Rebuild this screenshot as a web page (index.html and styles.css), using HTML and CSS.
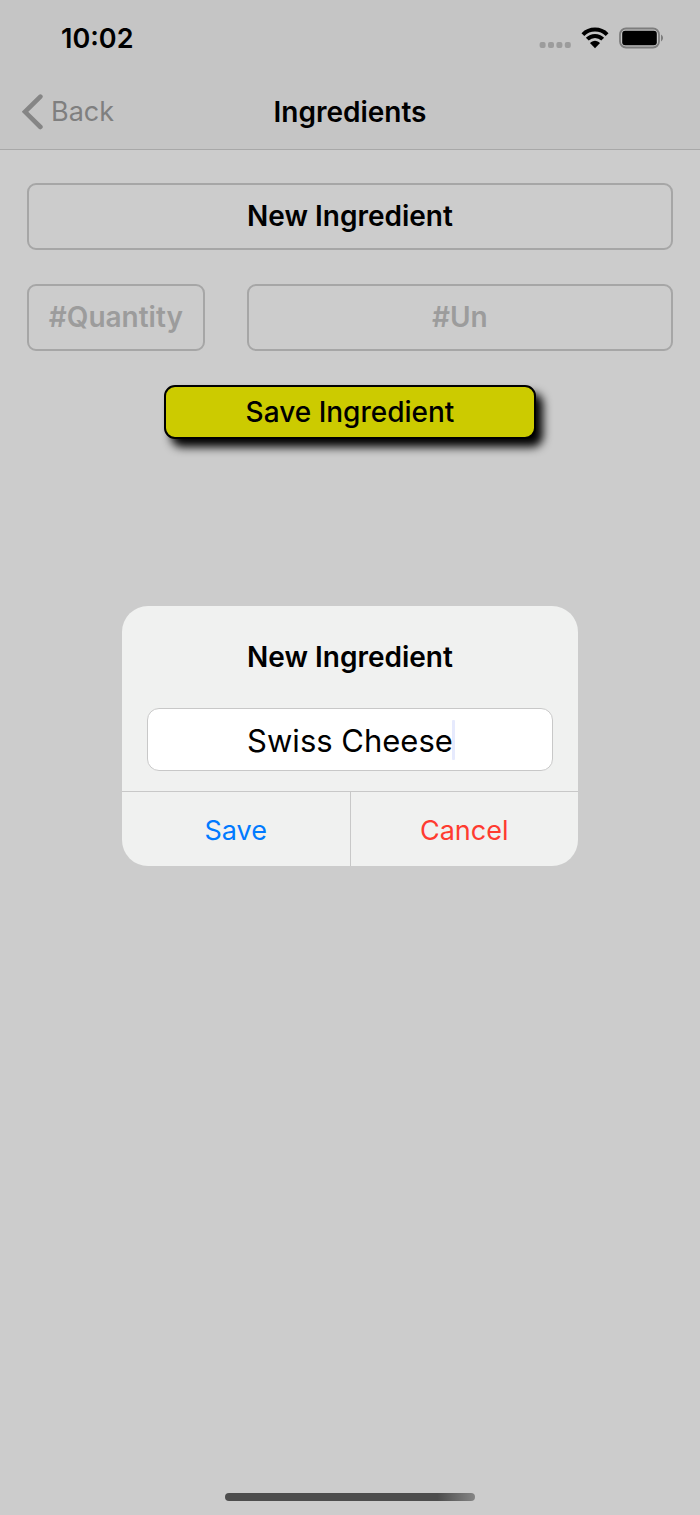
FILE: index.html
```html
<!DOCTYPE html>
<html lang="en">
<head>
    <meta charset="UTF-8">
    <title>Ingredients</title>
    <meta name="viewport" content="width=device-width, initial-scale=1.0">
    <link rel="stylesheet" href="styles.css">
</head>
<body>
    <header class="top-bar">
        <div class="status-bar">
            <span class="status-time">10:02</span>
            <div class="status-icons">
                <svg class="icon-signal" width="32" height="24" viewBox="0 0 32 24" fill="#9c9c9c">
                    <rect x="0.6" y="16" width="6" height="6" rx="2"/>
                    <rect x="9" y="16" width="6" height="6" rx="2"/>
                    <rect x="17.4" y="16" width="6" height="6" rx="2"/>
                    <rect x="25.8" y="16" width="6" height="6" rx="2"/>
                </svg>
                <svg class="icon-wifi" width="28" height="24" viewBox="0 0 28 24" fill="none" stroke="#000" stroke-width="4">
                    <path d="M1.9 8.6A17.2 17.2 0 0 1 26.1 8.6"/>
                    <path d="M6.3 13.2A10.8 10.8 0 0 1 21.7 13.2"/>
                    <path d="M14 22.2L9.4 17.4Q9.2 16.8 9.8 16.3Q14 13 18.2 16.3Q18.8 16.8 18.6 17.4Z" fill="#000" stroke="none"/>
                </svg>
                <svg class="icon-battery" width="45" height="24" viewBox="0 0 45 24">
                    <rect x="1" y="2.5" width="39" height="19" rx="6" fill="none" stroke="#7d7d7d" stroke-width="1.8"/>
                    <rect x="3.2" y="4.8" width="34.6" height="14.4" rx="3" fill="#000"/>
                    <path d="M42 8.6C44.7 10 44.7 14 42 15.4Z" fill="#7d7d7d"/>
                </svg>
            </div>
        </div>
        <nav class="nav-bar">
            <a href="#" class="back-link">
                <svg width="22" height="36" viewBox="0 0 22 36" fill="none" stroke="#858585" stroke-width="4.6" stroke-linecap="round" stroke-linejoin="miter">
                    <path d="M18.4 2.6L3 17.8L18.4 33"/>
                </svg>
                Back
            </a>
            <h1 class="nav-title">Ingredients</h1>
        </nav>
    </header>

    <main>
        <form class="ingredient-form">
            <button type="button" class="field">New Ingredient</button>
            <div class="field-row">
                <input type="text" class="field quantity" placeholder="#Quantity" aria-label="Quantity">
                <input type="text" class="field unit" placeholder="#Un" aria-label="Unit">
            </div>
            <button type="submit" class="save-btn">Save Ingredient</button>
        </form>
    </main>

    <div class="overlay">
        <div class="alert" role="dialog" aria-labelledby="alertTitle">
            <div class="alert-body">
                <h2 id="alertTitle" class="alert-title">New Ingredient</h2>
                <div class="alert-field">
                    <input type="text" class="alert-input" value="Swiss Cheese" aria-labelledby="alertTitle">
                    <span class="caret"></span>
                </div>
            </div>
            <div class="alert-actions">
                <button type="button" class="alert-btn save">Save</button>
                <button type="button" class="alert-btn cancel">Cancel</button>
            </div>
        </div>
    </div>

    <div class="home-indicator"></div>
</body>
</html>
```
FILE: styles.css
```css
* {
    box-sizing: border-box;
}
body {
    margin: 0;
    min-height: 100vh;
    background: #cccccc;
    color: #000;
    font-family: Inter, "Liberation Sans", sans-serif;
    font-size: 28px;
    display: flex;
    flex-direction: column;
}
button, input {
    font: inherit;
    color: inherit;
    margin: 0;
}
.top-bar {
    background: #c5c5c5;
    border-bottom: 1px solid #a8a8a8;
}
.status-bar {
    display: flex;
    justify-content: space-between;
    align-items: center;
    height: 76px;
    padding: 0 36px 0 61px;
}
.status-time {
    font-size: 27px;
    font-weight: 600;
}
.status-icons {
    display: flex;
    align-items: center;
}
.icon-wifi {
    margin: 0 10px;
}
.nav-bar {
    display: grid;
    grid-template-columns: 1fr auto 1fr;
    align-items: center;
    height: 73px;
    padding: 0 22px 2px;
}
.back-link {
    display: flex;
    align-items: center;
    gap: 7px;
    color: #7f7f7f;
    font-size: 27px;
    text-decoration: none;
}
.nav-title {
    margin: 0;
    font-size: 28px;
    font-weight: 600;
}
main {
    flex: 1;
}
.ingredient-form {
    display: flex;
    flex-direction: column;
    gap: 34px;
    padding: 33px 27px;
}
.field {
    width: 100%;
    height: 67px;
    padding: 0 8px 2px;
    background: transparent;
    border: 2px solid #a6a6a6;
    border-radius: 9px;
    font-weight: 600;
    text-align: center;
}
.field::placeholder {
    color: #9c9c9c;
    opacity: 1;
}
.field-row {
    display: grid;
    grid-template-columns: 5fr 12fr;
    gap: 42px;
}
.save-btn {
    align-self: center;
    width: 372px;
    max-width: 100%;
    height: 54px;
    padding: 0;
    background: #cccb00;
    border: 2px solid #000;
    border-radius: 11px;
    box-shadow: 7px 8px 10px #000;
    font-weight: 500;
}

/* alert dialog */
.overlay {
    position: absolute;
    inset: 0;
    display: flex;
    justify-content: center;
    align-items: center;
    padding: 0 20px 43px;
}
.alert {
    width: 456px;
    max-width: 100%;
    background: #f0f1f0;
    border-radius: 26px;
    overflow: hidden;
}
.alert-body {
    padding: 34px 25px 20px;
}
.alert-title {
    margin: 0 0 34px;
    font-size: 28px;
    line-height: 34px;
    font-weight: 600;
    text-align: center;
}
.alert-field {
    position: relative;
}
.alert-input {
    display: block;
    width: 100%;
    height: 63px;
    padding: 2px 8px 0;
    background: #fff;
    border: 1px solid #c8c8c8;
    border-radius: 12px;
    font-size: 31px;
    text-align: center;
}
.caret {
    position: absolute;
    top: 12px;
    left: calc(50% + 102px);
    width: 3px;
    height: 40px;
    border-radius: 1px;
    background: #e6eafd;
}
.alert-actions {
    display: flex;
    border-top: 1px solid #c8c8c8;
}
.alert-btn {
    flex: 1;
    height: 74px;
    padding: 2px 0 0;
    background: none;
    border: none;
    font-size: 27px;
}
.alert-btn.save {
    color: #007aff;
}
.alert-btn.cancel {
    color: #ff3b30;
    border-left: 1px solid #c8c8c8;
}

.home-indicator {
    align-self: center;
    width: 250px;
    height: 8px;
    margin-bottom: 14px;
    border-radius: 4px;
    background: linear-gradient(90deg, #4d4d4d 85%, #858585 100%);
}
```
